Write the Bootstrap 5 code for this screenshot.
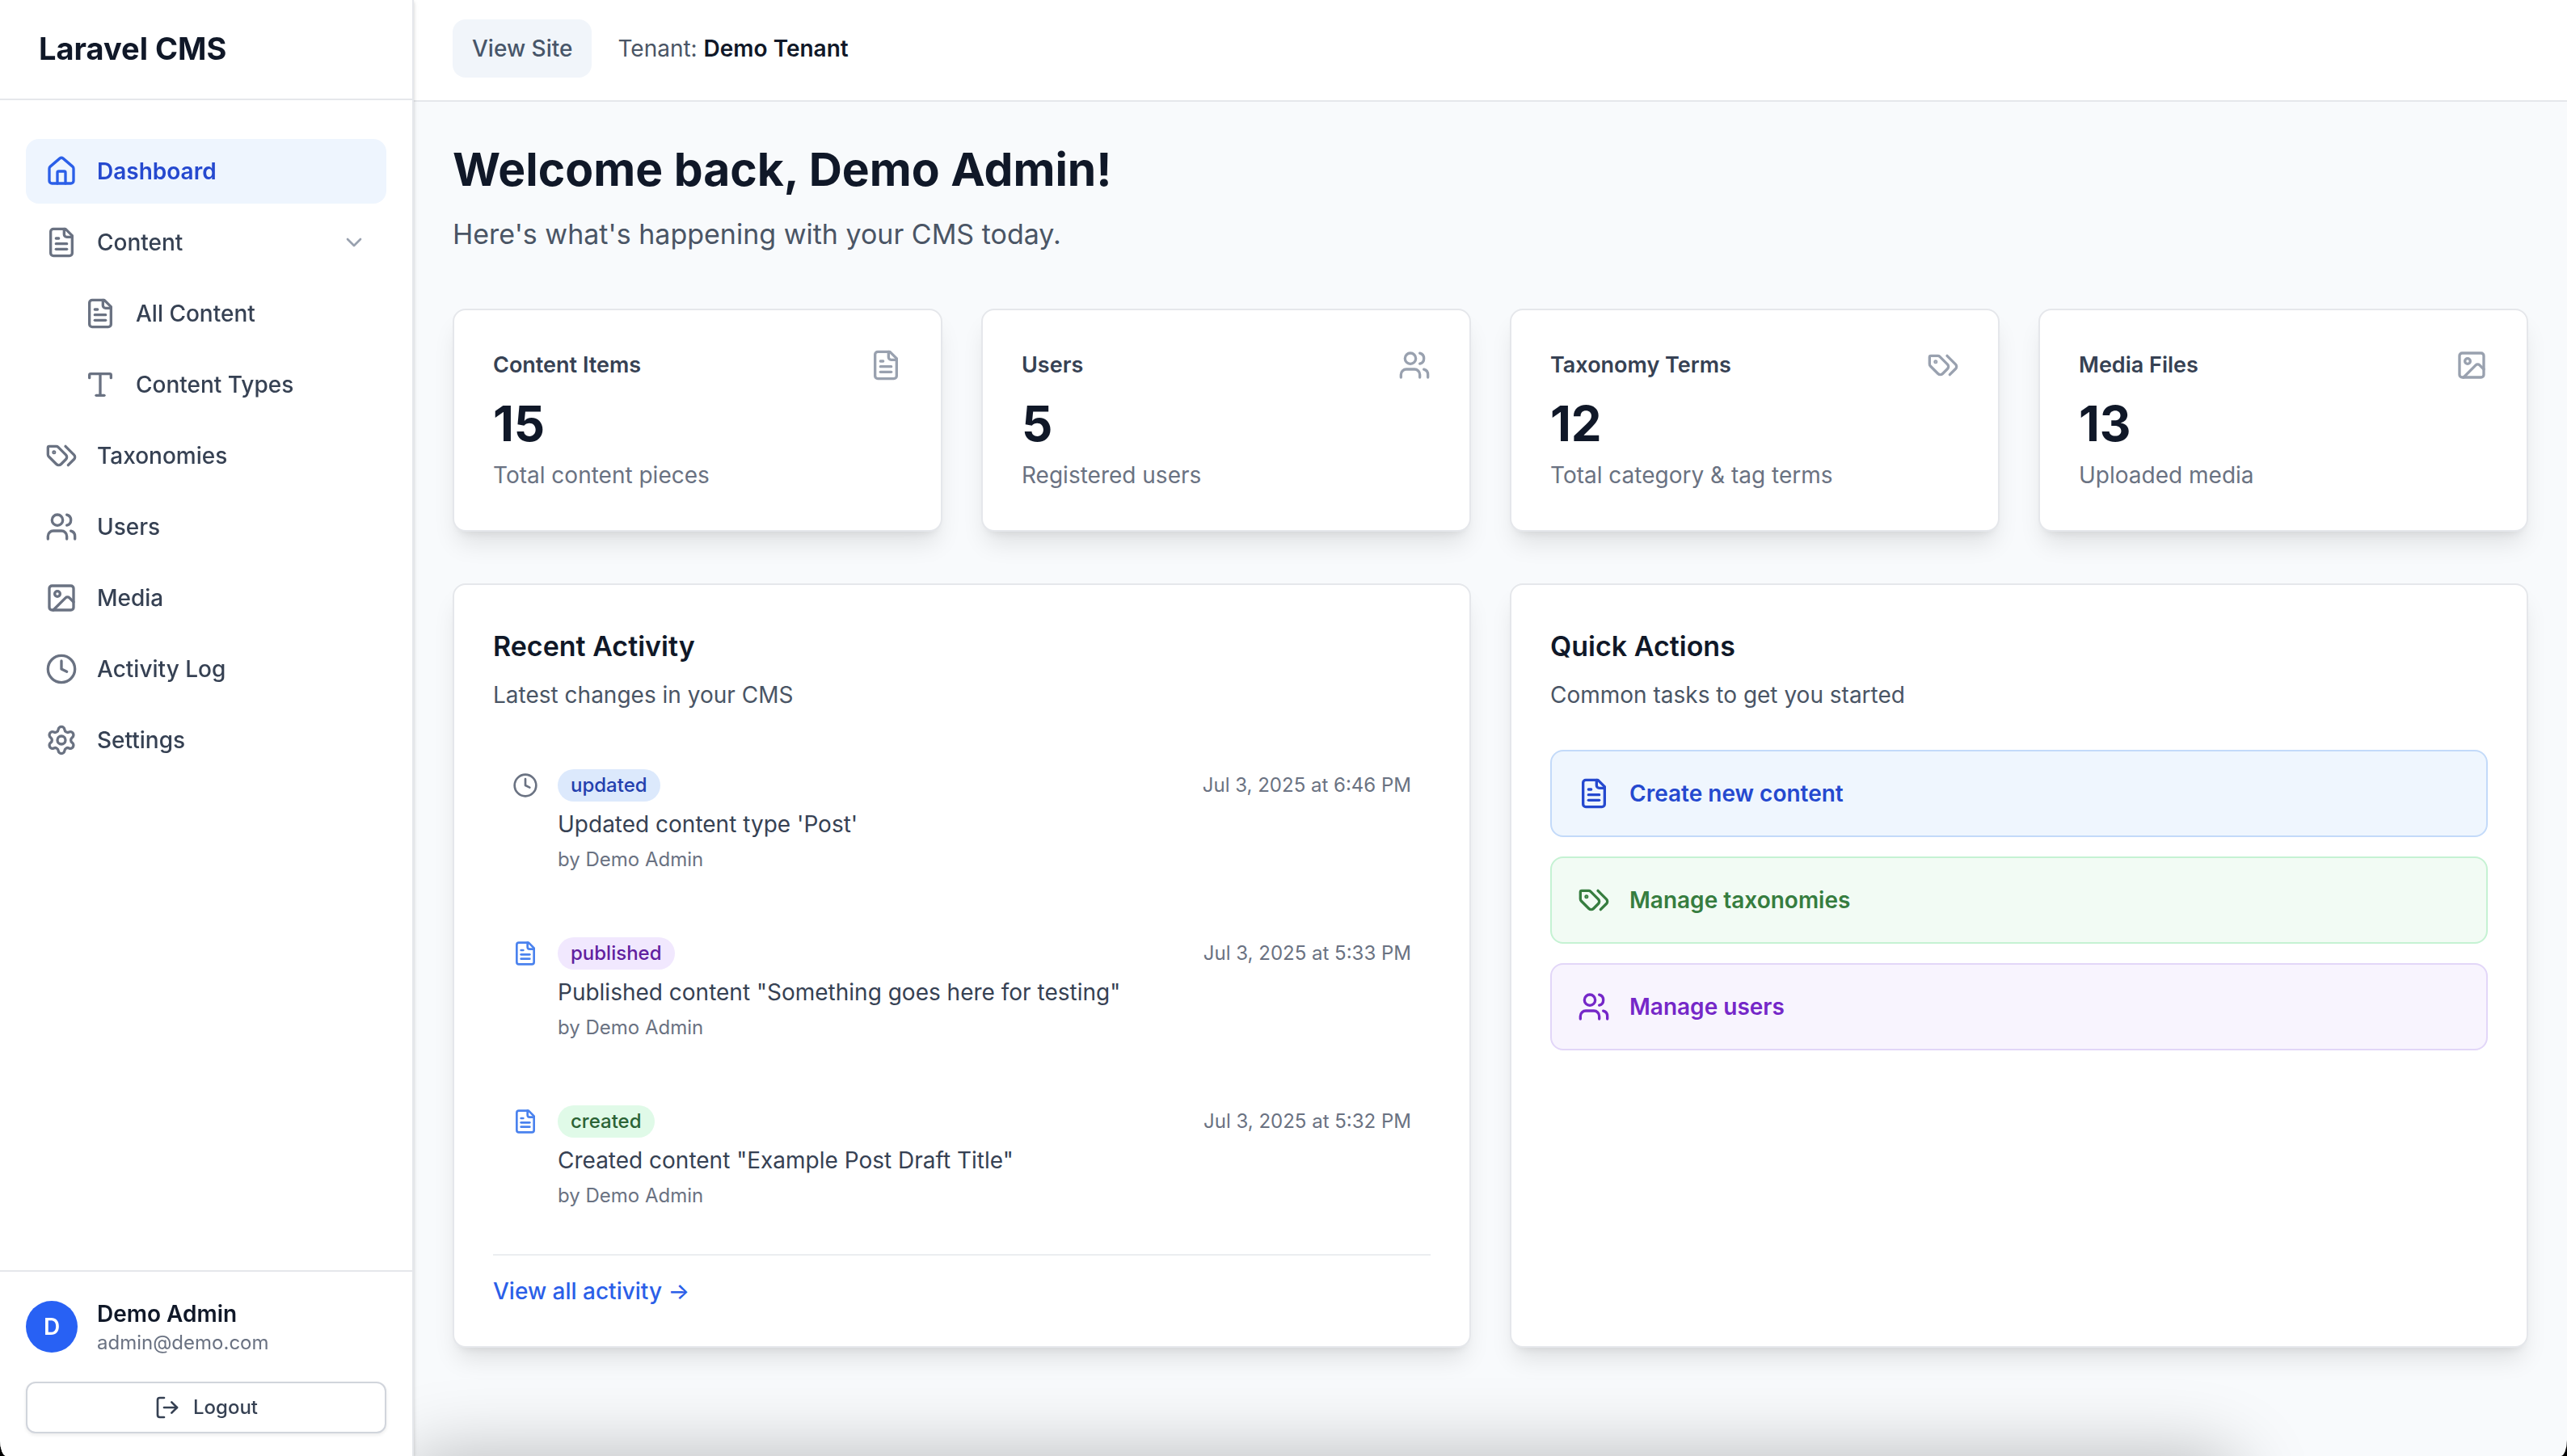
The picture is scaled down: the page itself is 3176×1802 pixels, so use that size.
<!DOCTYPE html>
<html lang="en">
<head>
<meta charset="utf-8">
<meta name="viewport" content="width=device-width, initial-scale=1">
<title>Dashboard - Laravel CMS</title>
<link href="https://cdn.jsdelivr.net/npm/bootstrap@5.3.0/dist/css/bootstrap.min.css" rel="stylesheet">
<style>
  :root {
    --ink: #101828; --ink-700: #364153; --ink-600: #4a5565; --ink-500: #6a7282; --ink-400: #99a1af;
    --line: #e5e7eb; --canvas: #f8fafc;
  }
  html { background: #000; }
  body { background: #000; color: var(--ink); font-family: Inter, "Liberation Sans", sans-serif; font-size: 28px; line-height: 40px; }
  a { text-decoration: none; }
  .shell { min-height: 100vh; background: var(--canvas); border-radius: 0 0 8px 8px / 0 0 20px 20px; }
  .ico { width: 40px; height: 40px; flex: none; fill: none; stroke: currentColor; stroke-width: 2; stroke-linecap: round; stroke-linejoin: round; }
  .ico-sm { width: 32px; height: 32px; }

  .side { width: 512px; flex: none; background: #fff; border-right: 2px solid var(--line); box-shadow: 0 2px 6px rgba(0,0,0,.1), 0 2px 4px rgba(0,0,0,.1); }
  .side-head { padding: 32px 48px 34px; border-bottom: 2px solid var(--line); }
  .side-title { font-size: 38px; line-height: 56px; font-weight: 700; color: var(--ink); }
  .side-nav { padding: 48px 32px; gap: 8px; }
  .side-link { display: flex; align-items: center; gap: 24px; width: 100%; padding: 20px 24px; border: 0; border-radius: 16px; background: none; color: var(--ink-700); font-weight: 500; text-align: left; }
  .side-link .ico { color: var(--ink-500); }
  .side-link .ico-sm { color: var(--ink-400); }
  .side-link.is-active { background: #eef5fe; color: #2549cf; font-weight: 600; }
  .side-link.is-active .ico { color: #2b5fe8; }
  .side-sub { padding-left: 48px; gap: 8px; }
  .side-foot { padding: 32px 32px 28px; border-top: 2px solid var(--line); }
  .avatar { width: 64px; height: 64px; border-radius: 50%; background: #2861f4; color: #fff; font-weight: 600; }
  .fs-meta { font-size: 24px; line-height: 32px; color: var(--ink-500); }
  .btn-logout { height: 64px; border: 2px solid #d1d5dc; border-radius: 12px; background: #fff; color: var(--ink-700); font-size: 24px; font-weight: 500; line-height: 32px; box-shadow: 0 2px 4px rgba(0,0,0,.08); }

  .topbar { padding: 24px 48px 28px; background: #fff; border-bottom: 2px solid var(--line); }
  .btn-site { padding: 16px 24px; border: 0; border-radius: 16px; background: #f1f5fa; color: #475569; font-size: 28px; line-height: 40px; font-weight: 500; }
  .page { padding: 48px; }
  .page-title { font-size: 57px; line-height: 72px; font-weight: 700; margin: 0 0 16px; }
  .page-sub { font-size: 34px; line-height: 56px; color: var(--ink-600); margin: 0 0 64px; }
  .panel-grid { --bs-gutter-x: 48px; --bs-gutter-y: 48px; }
  .panel { height: 100%; padding: 48px; background: #fff; border: 2px solid var(--line); border-radius: 16px; box-shadow: 0 20px 30px -6px rgba(0,0,0,.1), 0 8px 12px -8px rgba(0,0,0,.1); }
  .stat-title { font-size: 27px; line-height: 40px; font-weight: 600; color: var(--ink-700); margin: 0; }
  .stat-num { font-size: 60px; line-height: 72px; font-weight: 700; margin: 16px 0 8px; }
  .tone-400 { color: var(--ink-400); } .tone-500 { color: var(--ink-500); } .tone-600 { color: var(--ink-600); } .tone-700 { color: var(--ink-700); }
  .tone-ink { color: var(--ink); }
  .tone-blue { color: #4a82ee; }
  .panel-title { font-size: 34px; line-height: 56px; font-weight: 600; margin: 0 0 12px; }
  .feed { margin: 48px 0 32px; gap: 32px; }
  .feed-item { gap: 24px; padding: 24px; }
  .feed-item > .ico { margin-top: 4px; }
  .pill { padding: 4px 16px; border-radius: 20px; font-size: 24px; line-height: 32px; font-weight: 500; }
  .pill-blue { background: #dce9fc; color: #2340ae; }
  .pill-purple { background: #f1e8fe; color: #61209f; }
  .pill-green { background: #e0fae8; color: #2b6335; }
  .feed-text { margin: 8px 0; }
  .feed-more { padding-top: 24px; border-top: 2px solid #ebedf0; }
  .feed-more a { color: #2b5fe8; font-weight: 500; }
  .actions { margin-top: 48px; gap: 24px; }
  .action { gap: 24px; padding: 32px; border: 2px solid; border-radius: 16px; font-weight: 600; }
  .action-blue { background: #eff6fe; border-color: #c3daf9; color: #2549cf; }
  .action-green { background: #f2fbf4; border-color: #c5f2d3; color: #367d3f; }
  .action-purple { background: #f8f4fe; border-color: #e2d6f8; color: #7527c8; }
  .dock-shade { position: fixed; left: 16%; right: 13%; top: 100%; height: 80px; border-radius: 40px; box-shadow: 0 8px 90px 10px rgba(0,0,0,.26); pointer-events: none; }
</style>
<script src="https://cdn.jsdelivr.net/npm/bootstrap@5.3.0/dist/js/bootstrap.bundle.min.js"></script>
</head>
<body>
<svg class="d-none" aria-hidden="true">
  <symbol id="i-home" viewBox="0 0 24 24"><path d="M15 21v-8a1 1 0 0 0-1-1h-4a1 1 0 0 0-1 1v8"/><path d="M3 10a2 2 0 0 1 .709-1.528l7-5.999a2 2 0 0 1 2.582 0l7 5.999A2 2 0 0 1 21 10v9a2 2 0 0 1-2 2H5a2 2 0 0 1-2-2z"/></symbol>
  <symbol id="i-file" viewBox="0 0 24 24"><path d="M15 2H6a2 2 0 0 0-2 2v16a2 2 0 0 0 2 2h12a2 2 0 0 0 2-2V7Z"/><path d="M14 2v4a2 2 0 0 0 2 2h4"/><path d="M10 9H8"/><path d="M16 13H8"/><path d="M16 17H8"/></symbol>
  <symbol id="i-type" viewBox="0 0 24 24"><path d="M12 4v16"/><path d="M4 7V5a1 1 0 0 1 1-1h14a1 1 0 0 1 1 1v2"/><path d="M9 20h6"/></symbol>
  <symbol id="i-tags" viewBox="0 0 24 24"><path d="m15 5 6.3 6.3a2.4 2.4 0 0 1 0 3.4L17 19"/><path d="M9.586 5.586A2 2 0 0 0 8.172 5H3a1 1 0 0 0-1 1v5.172a2 2 0 0 0 .586 1.414L8.29 18.29a2.426 2.426 0 0 0 3.42 0l3.58-3.58a2.426 2.426 0 0 0 0-3.42z"/><circle cx="6.5" cy="9.5" r=".5" fill="currentColor"/></symbol>
  <symbol id="i-users" viewBox="0 0 24 24"><path d="M16 21v-2a4 4 0 0 0-4-4H6a4 4 0 0 0-4 4v2"/><circle cx="9" cy="7" r="4"/><path d="M22 21v-2a4 4 0 0 0-3-3.87"/><path d="M16 3.13a4 4 0 0 1 0 7.75"/></symbol>
  <symbol id="i-image" viewBox="0 0 24 24"><rect width="18" height="18" x="3" y="3" rx="2"/><circle cx="9" cy="9" r="2"/><path d="m21 15-3.086-3.086a2 2 0 0 0-2.828 0L6 21"/></symbol>
  <symbol id="i-clock" viewBox="0 0 24 24"><circle cx="12" cy="12" r="10"/><path d="M12 6v6l4 2"/></symbol>
  <symbol id="i-gear" viewBox="0 0 24 24"><path d="M9.671 4.136a2.34 2.34 0 0 1 4.659 0 2.34 2.34 0 0 0 3.319 1.915 2.34 2.34 0 0 1 2.33 4.033 2.34 2.34 0 0 0 0 3.831 2.34 2.34 0 0 1-2.33 4.033 2.34 2.34 0 0 0-3.319 1.915 2.34 2.34 0 0 1-4.659 0 2.34 2.34 0 0 0-3.32-1.915 2.34 2.34 0 0 1-2.33-4.033 2.34 2.34 0 0 0 0-3.831A2.34 2.34 0 0 1 6.35 6.051a2.34 2.34 0 0 0 3.319-1.915"/><circle cx="12" cy="12" r="3"/></symbol>
  <symbol id="i-chevron" viewBox="0 0 24 24"><path d="m6 9 6 6 6-6"/></symbol>
  <symbol id="i-logout" viewBox="0 0 24 24"><path d="M9 21H5a2 2 0 0 1-2-2V5a2 2 0 0 1 2-2h4"/><path d="m16 17 5-5-5-5"/><path d="M21 12H9"/></symbol>
</svg>

<div class="shell d-flex overflow-hidden">
  <aside class="side d-flex flex-column position-relative z-1">
    <div class="side-head"><a class="side-title d-block" href="#">Laravel CMS</a></div>
    <nav class="side-nav d-flex flex-column flex-grow-1" aria-label="Main">
      <a class="side-link is-active" href="#" aria-current="page"><svg class="ico"><use href="#i-home"/></svg>Dashboard</a>
      <button class="side-link" type="button" aria-expanded="true"><svg class="ico"><use href="#i-file"/></svg><span class="flex-grow-1">Content</span><svg class="ico ico-sm"><use href="#i-chevron"/></svg></button>
      <div class="side-sub d-flex flex-column">
        <a class="side-link" href="#"><svg class="ico"><use href="#i-file"/></svg>All Content</a>
        <a class="side-link" href="#"><svg class="ico"><use href="#i-type"/></svg>Content Types</a>
      </div>
      <a class="side-link" href="#"><svg class="ico"><use href="#i-tags"/></svg>Taxonomies</a>
      <a class="side-link" href="#"><svg class="ico"><use href="#i-users"/></svg>Users</a>
      <a class="side-link" href="#"><svg class="ico"><use href="#i-image"/></svg>Media</a>
      <a class="side-link" href="#"><svg class="ico"><use href="#i-clock"/></svg>Activity Log</a>
      <a class="side-link" href="#"><svg class="ico"><use href="#i-gear"/></svg>Settings</a>
    </nav>
    <div class="side-foot">
      <div class="d-flex align-items-center gap-4 mb-4 pb-2">
        <div class="avatar d-flex align-items-center justify-content-center">D</div>
        <div>
          <div class="fw-semibold">Demo Admin</div>
          <div class="fs-meta">admin@demo.com</div>
        </div>
      </div>
      <button class="btn-logout w-100 d-flex align-items-center justify-content-center gap-3" type="button"><svg class="ico ico-sm"><use href="#i-logout"/></svg>Logout</button>
    </div>
  </aside>

  <div class="flex-grow-1">
    <header class="topbar d-flex align-items-center">
      <a class="btn-site me-3" href="#">View Site</a>
      <div class="tone-600 ms-3">Tenant: <span class="fw-semibold tone-ink">Demo Tenant</span></div>
    </header>

    <main class="page">
      <h1 class="page-title">Welcome back, Demo Admin!</h1>
      <p class="page-sub">Here's what's happening with your CMS today.</p>

      <div class="row panel-grid mb-5 pb-3">
        <div class="col-3"><section class="panel">
          <div class="d-flex justify-content-between"><h2 class="stat-title">Content Items</h2><svg class="ico tone-400"><use href="#i-file"/></svg></div>
          <div class="stat-num">15</div><div class="tone-500">Total content pieces</div>
        </section></div>
        <div class="col-3"><section class="panel">
          <div class="d-flex justify-content-between"><h2 class="stat-title">Users</h2><svg class="ico tone-400"><use href="#i-users"/></svg></div>
          <div class="stat-num">5</div><div class="tone-500">Registered users</div>
        </section></div>
        <div class="col-3"><section class="panel">
          <div class="d-flex justify-content-between"><h2 class="stat-title">Taxonomy Terms</h2><svg class="ico tone-400"><use href="#i-tags"/></svg></div>
          <div class="stat-num">12</div><div class="tone-500">Total category &amp; tag terms</div>
        </section></div>
        <div class="col-3"><section class="panel">
          <div class="d-flex justify-content-between"><h2 class="stat-title">Media Files</h2><svg class="ico tone-400"><use href="#i-image"/></svg></div>
          <div class="stat-num">13</div><div class="tone-500">Uploaded media</div>
        </section></div>
      </div>

      <div class="row panel-grid">
        <div class="col-6"><section class="panel">
          <h2 class="panel-title">Recent Activity</h2>
          <div class="tone-600">Latest changes in your CMS</div>
          <div class="feed d-flex flex-column">
            <article class="feed-item d-flex">
              <svg class="ico ico-sm tone-500"><use href="#i-clock"/></svg>
              <div class="flex-grow-1">
                <div class="d-flex align-items-center justify-content-between"><span class="pill pill-blue">updated</span><time class="fs-meta">Jul 3, 2025 at 6:46 PM</time></div>
                <p class="feed-text tone-700">Updated content type 'Post'</p>
                <div class="fs-meta">by Demo Admin</div>
              </div>
            </article>
            <article class="feed-item d-flex">
              <svg class="ico ico-sm tone-blue"><use href="#i-file"/></svg>
              <div class="flex-grow-1">
                <div class="d-flex align-items-center justify-content-between"><span class="pill pill-purple">published</span><time class="fs-meta">Jul 3, 2025 at 5:33 PM</time></div>
                <p class="feed-text tone-700">Published content "Something goes here for testing"</p>
                <div class="fs-meta">by Demo Admin</div>
              </div>
            </article>
            <article class="feed-item d-flex">
              <svg class="ico ico-sm tone-blue"><use href="#i-file"/></svg>
              <div class="flex-grow-1">
                <div class="d-flex align-items-center justify-content-between"><span class="pill pill-green">created</span><time class="fs-meta">Jul 3, 2025 at 5:32 PM</time></div>
                <p class="feed-text tone-700">Created content "Example Post Draft Title"</p>
                <div class="fs-meta">by Demo Admin</div>
              </div>
            </article>
          </div>
          <div class="feed-more"><a href="#">View all activity →</a></div>
        </section></div>
        <div class="col-6"><section class="panel">
          <h2 class="panel-title">Quick Actions</h2>
          <div class="tone-600">Common tasks to get you started</div>
          <div class="actions d-flex flex-column">
            <a class="action action-blue d-flex align-items-center" href="#"><svg class="ico"><use href="#i-file"/></svg>Create new content</a>
            <a class="action action-green d-flex align-items-center" href="#"><svg class="ico"><use href="#i-tags"/></svg>Manage taxonomies</a>
            <a class="action action-purple d-flex align-items-center" href="#"><svg class="ico"><use href="#i-users"/></svg>Manage users</a>
          </div>
        </section></div>
      </div>
    </main>
  </div>
</div>
<div class="dock-shade"></div>
</body>
</html>
